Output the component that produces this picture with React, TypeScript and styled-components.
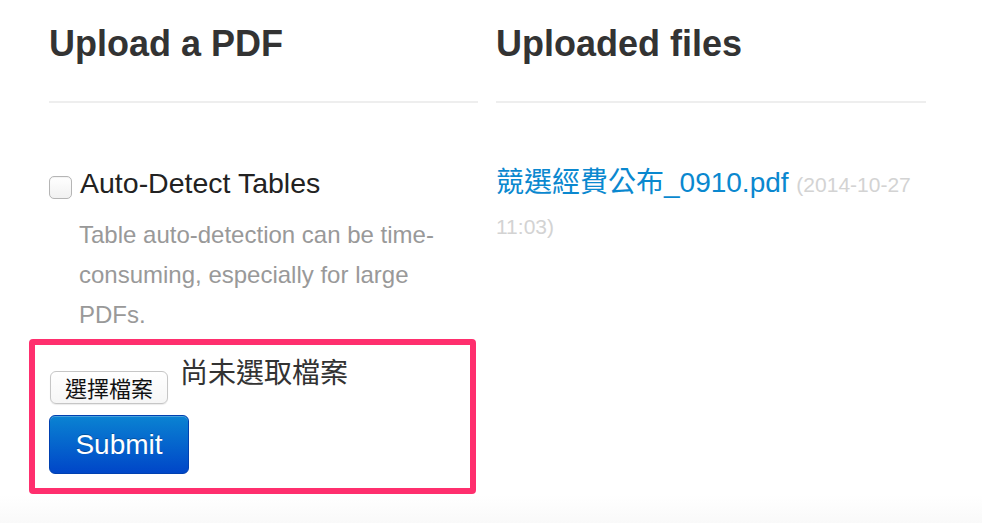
import styled, {createGlobalStyle} from 'styled-components';

const GlobalStyle = createGlobalStyle`
  html, body {
    margin: 0;
    padding: 0;
    background: #fff;
  }
  body {
    font-family: "Liberation Sans", "Noto Sans CJK TC", Arial, sans-serif;
    color: #333;
  }
`;

const Page = styled.div`
  height: 523px;
  display: flex;
  flex-direction: column;
  overflow: hidden;
`;

const Columns = styled.div`
  display: grid;
  grid-template-columns: 429px 430px;
  column-gap: 18px;
  padding-left: 49px;
  padding-top: 24px;
  flex: 1;
`;

const Column = styled.section`
  display: flex;
  flex-direction: column;
`;

const Heading = styled.h2`
  margin: 0;
  font-size: 36px;
  line-height: 40px;
  font-weight: 700;
  color: #333;
  padding-bottom: 37px;
  border-bottom: 2px solid #eee;
  margin-bottom: 60px;
`;

const CheckRow = styled.label`
  display: flex;
  align-items: center;
  gap: 8px;
  font-size: 28.5px;
  line-height: 40px;
  color: #222;
  cursor: pointer;
`;

const Checkbox = styled.input.attrs({type: 'checkbox'})`
  appearance: none;
  margin: 8px 0 0 0;
  width: 23px;
  height: 23px;
  border: 1px solid #b5b5b5;
  border-radius: 5px;
  background: linear-gradient(#ffffff, #f1f1f1);
  box-shadow: inset 0 1px 1px rgba(0, 0, 0, 0.05);
  flex-shrink: 0;
`;

const Help = styled.p`
  margin: 12px 0 0 0;
  padding-left: 30px;
  font-size: 24px;
  line-height: 40px;
  color: #999;
`;

const Highlight = styled.div`
  margin: 4px 0 0 -20px;
  width: 447px;
  box-sizing: border-box;
  border: 6px solid #ff2f6e;
  border-radius: 4px;
  padding: 6px 14px 14px 14px;
  display: flex;
  flex-direction: column;
  gap: 11px;
`;

const FileRow = styled.div`
  display: flex;
  align-items: flex-start;
  gap: 12px;
`;

const FileButton = styled.button`
  margin-top: 20px;
  margin-left: 1px;
  height: 33px;
  padding: 0 14px;
  border: 1px solid #c6c6c6;
  border-radius: 6px;
  background: linear-gradient(#ffffff, #f6f6f6);
  box-shadow: 0 1px 1px rgba(0, 0, 0, 0.08);
  font-family: "Noto Sans CJK TC", sans-serif;
  font-size: 22px;
  line-height: 31px;
  color: #111;
`;

const FileStatus = styled.span`
  font-family: "Noto Sans CJK TC", sans-serif;
  font-size: 28px;
  line-height: 40px;
  color: #333;
`;

const SubmitButton = styled.button`
  align-self: flex-start;
  width: 140px;
  height: 59px;
  border: 1px solid #0040b0;
  border-radius: 6px;
  background: linear-gradient(#0a83d2, #0046c8);
  box-shadow: inset 0 1px 0 rgba(255, 255, 255, 0.25);
  color: #fff;
  font-family: "Liberation Sans", Arial, sans-serif;
  font-size: 28px;
  text-shadow: 0 -1px 0 rgba(0, 0, 0, 0.25);
`;

const FileList = styled.ul`
  list-style: none;
  margin: 0;
  padding: 0;
  font-size: 28px;
  line-height: 40px;
`;

const FileItem = styled.li`
  margin: 0;
`;

const FileLink = styled.a`
  color: #0a88cf;
  text-decoration: none;
  font-family: "Liberation Sans", "Noto Sans CJK TC", sans-serif;
`;

const FileDate = styled.span`
  font-size: 21px;
  color: #d3d3d3;
`;

const Footer = styled.div`
  height: 28px;
  background: linear-gradient(#ffffff, #f9f9f9);
`;

export default function App() {
  return (
    <Page>
      <GlobalStyle />
      <Columns>
        <Column>
          <Heading>Upload a PDF</Heading>
          <CheckRow>
            <Checkbox />
            Auto-Detect Tables
          </CheckRow>
          <Help>Table auto-detection can be time-consuming, especially for large PDFs.</Help>
          <Highlight>
            <FileRow>
              <FileButton type="button">選擇檔案</FileButton>
              <FileStatus>尚未選取檔案</FileStatus>
            </FileRow>
            <SubmitButton type="submit">Submit</SubmitButton>
          </Highlight>
        </Column>
        <Column>
          <Heading>Uploaded files</Heading>
          <FileList>
            <FileItem>
              <FileLink href="#">競選經費公布_0910.pdf</FileLink>{' '}
              <FileDate>(2014-10-27 11:03)</FileDate>
            </FileItem>
          </FileList>
        </Column>
      </Columns>
      <Footer />
    </Page>
  );
}
